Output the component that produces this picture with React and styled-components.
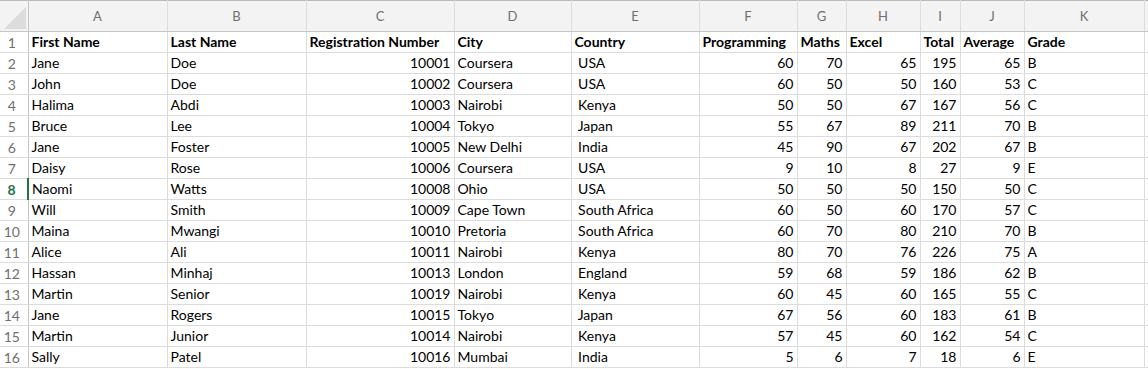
import React from "react";
import styled, { createGlobalStyle } from "styled-components";

const GlobalStyle = createGlobalStyle`
  html, body {
    margin: 0;
    padding: 0;
    background: #ffffff;
  }
`;

const columns = [
  { key: "A", width: 139 },
  { key: "B", width: 139 },
  { key: "C", width: 148 },
  { key: "D", width: 117 },
  { key: "E", width: 128 },
  { key: "F", width: 98 },
  { key: "G", width: 49 },
  { key: "H", width: 74 },
  { key: "I", width: 40 },
  { key: "J", width: 64 },
  { key: "K", width: 120 },
  { key: "", width: 4 },
];

const headers = [
  "First Name",
  "Last Name",
  "Registration Number",
  "City",
  "Country",
  "Programming",
  "Maths",
  "Excel",
  "Total",
  "Average",
  "Grade",
];

const rows = [
  ["Jane", "Doe", 10001, "Coursera", " USA", 60, 70, 65, 195, 65, "B"],
  ["John", "Doe", 10002, "Coursera", " USA", 60, 50, 50, 160, 53, "C"],
  ["Halima", "Abdi", 10003, "Nairobi", " Kenya", 50, 50, 67, 167, 56, "C"],
  ["Bruce", "Lee", 10004, "Tokyo", " Japan", 55, 67, 89, 211, 70, "B"],
  ["Jane", "Foster", 10005, "New Delhi", " India", 45, 90, 67, 202, 67, "B"],
  ["Daisy", "Rose", 10006, "Coursera", " USA", 9, 10, 8, 27, 9, "E"],
  ["Naomi", "Watts", 10008, "Ohio", " USA", 50, 50, 50, 150, 50, "C"],
  ["Will", "Smith", 10009, "Cape Town", " South Africa", 60, 50, 60, 170, 57, "C"],
  ["Maina", "Mwangi", 10010, "Pretoria", " South Africa", 60, 70, 80, 210, 70, "B"],
  ["Alice", "Ali", 10011, "Nairobi", " Kenya", 80, 70, 76, 226, 75, "A"],
  ["Hassan", "Minhaj", 10013, "London", " England", 59, 68, 59, 186, 62, "B"],
  ["Martin", "Senior", 10019, "Nairobi", " Kenya", 60, 45, 60, 165, 55, "C"],
  ["Jane", "Rogers", 10015, "Tokyo", " Japan", 67, 56, 60, 183, 61, "B"],
  ["Martin", "Junior", 10014, "Nairobi", " Kenya", 57, 45, 60, 162, 54, "C"],
  ["Sally", "Patel", 10016, "Mumbai", " India", 5, 6, 7, 18, 6, "E"],
];

const activeRow = 8;

const Sheet = styled.table`
  border-collapse: collapse;
  table-layout: fixed;
  width: 1148px;
  font-family: "Lato", "Liberation Sans", sans-serif;
  font-size: 14px;
  color: #000000;
  border-top: 1px solid #b9b9b9;
`;

const ColHead = styled.th`
  height: 30px;
  padding: 0;
  background: #f3f3f3;
  color: #6f6f6f;
  font-weight: 400;
  font-size: 13px;
  text-align: center;
  border-left: 1px solid #dcdcdc;
  border-bottom: 1px solid #c6c6c6;
  overflow: hidden;
`;

const Corner = styled.th`
  position: relative;
  height: 30px;
  padding: 0;
  background: #f3f3f3;
  border-bottom: 1px solid #c6c6c6;
  border-right: 1px solid #c6c6c6;
  overflow: hidden;

  &::after {
    content: "";
    position: absolute;
    right: 2px;
    bottom: 2px;
    width: 0;
    height: 0;
    border-left: 22px solid transparent;
    border-bottom: 22px solid #dcdcdc;
  }
`;

const RowHead = styled.th`
  height: 20px;
  padding: 0 4px 0 0;
  background: #ffffff;
  color: ${(p) => (p.$active ? "#217346" : "#6f6f6f")};
  font-weight: ${(p) => (p.$active ? 700 : 400)};
  font-size: 14px;
  text-align: center;
  border-bottom: 1px solid #dcdcdc;
  border-right: ${(p) => (p.$active ? "2px solid #217346" : "1px solid #c6c6c6")};
`;

const Cell = styled.td`
  height: 20px;
  padding: 0 3px;
  font-weight: ${(p) => (p.$bold ? 700 : 400)};
  text-align: ${(p) => (p.$num ? "right" : "left")};
  white-space: pre;
  overflow: hidden;
  border-left: 1px solid #dcdcdc;
  border-bottom: 1px solid #dcdcdc;
  line-height: 20px;
`;

export default function App() {
  return (
    <>
      <GlobalStyle />
      <Sheet>
        <colgroup>
          <col style={{ width: 28 }} />
          {columns.map((c, i) => (
            <col key={i} style={{ width: c.width }} />
          ))}
        </colgroup>
        <thead>
          <tr>
            <Corner />
            {columns.map((c, i) => (
              <ColHead key={i}>{c.key}</ColHead>
            ))}
          </tr>
        </thead>
        <tbody>
          <tr>
            <RowHead>1</RowHead>
            {headers.map((h, i) => (
              <Cell key={i} $bold>
                {h}
              </Cell>
            ))}
            <Cell />
          </tr>
          {rows.map((r, ri) => {
            const n = ri + 2;
            return (
              <tr key={n}>
                <RowHead $active={n === activeRow}>{n}</RowHead>
                {r.map((v, ci) => (
                  <Cell key={ci} $num={typeof v === "number"}>
                    {v}
                  </Cell>
                ))}
                <Cell />
              </tr>
            );
          })}
        </tbody>
      </Sheet>
    </>
  );
}
